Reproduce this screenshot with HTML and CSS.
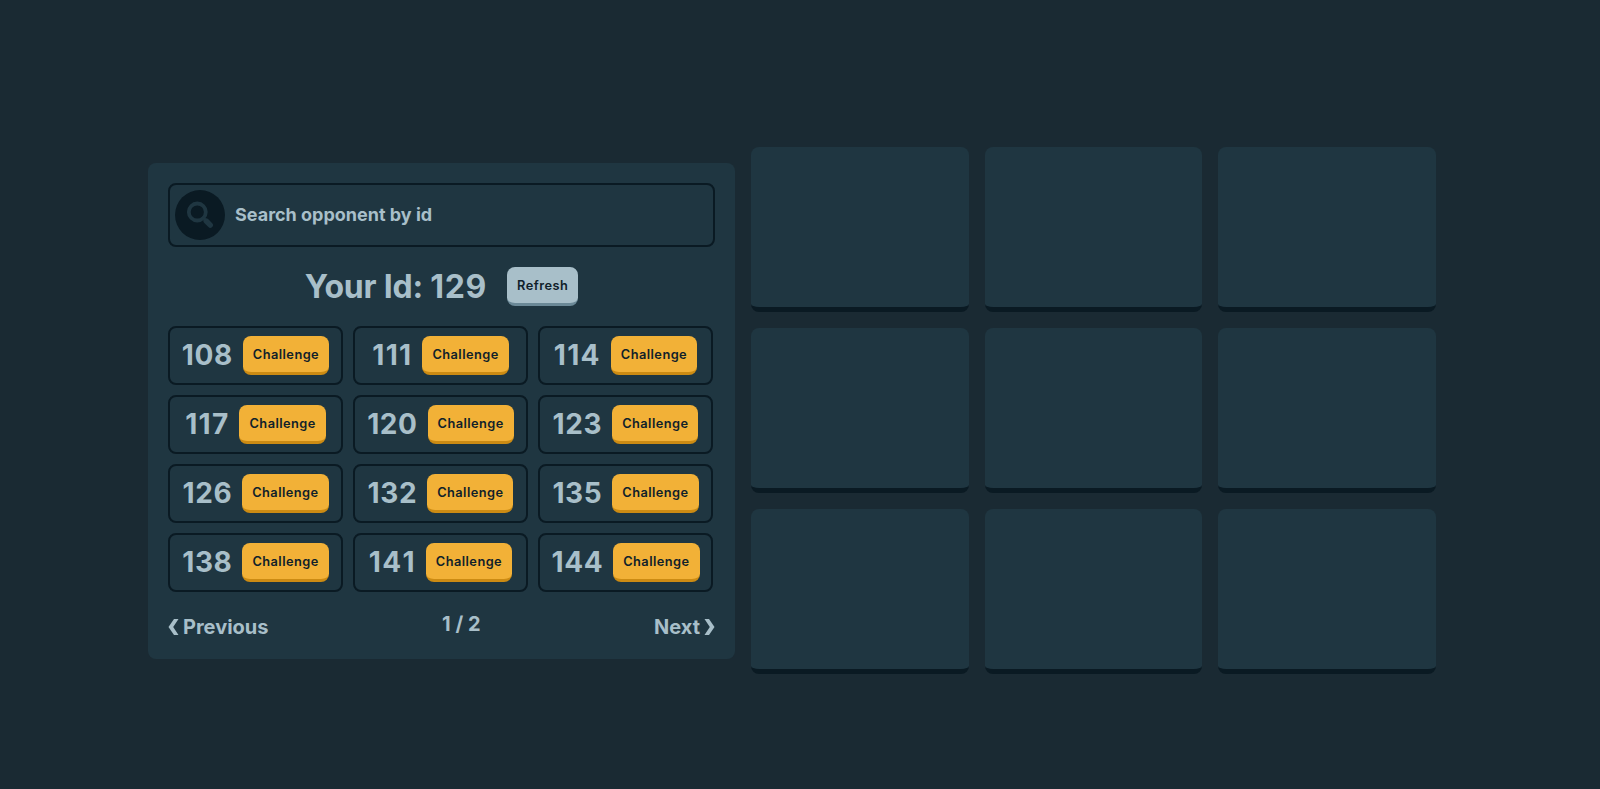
FILE: index.html
```html
<!DOCTYPE html>
<html lang="en">
<head>
<meta charset="utf-8">
<title>Tic Tac Toe</title>
<link rel="stylesheet" href="styles.css">
</head>
<body>
<main class="game">
  <section class="lobby">
    <div class="search">
      <span class="search-icon">
        <svg width="28" height="28" viewBox="0 0 28 28" fill="none"><circle cx="11.3" cy="11" r="8.5" stroke-width="3.8"/><path d="M17 16.7L19.5 19.2" stroke-width="3"/><path d="M20.2 20L24.3 24.1" stroke-width="5.4" stroke-linecap="round"/></svg>
      </span>
      <span class="search-text">Search opponent by id</span>
    </div>
    <div class="identity"><h1>Your Id: <span class="digits">129</span></h1><button class="btn refresh">Refresh</button></div>
    <div class="players">
      <div class="player"><b>108</b><button class="btn">Challenge</button></div>
      <div class="player"><b class="narrow">111</b><button class="btn">Challenge</button></div>
      <div class="player"><b class="narrow">114</b><button class="btn">Challenge</button></div>
      <div class="player"><b class="narrow">117</b><button class="btn">Challenge</button></div>
      <div class="player"><b>120</b><button class="btn">Challenge</button></div>
      <div class="player"><b>123</b><button class="btn">Challenge</button></div>
      <div class="player"><b>126</b><button class="btn">Challenge</button></div>
      <div class="player"><b>132</b><button class="btn">Challenge</button></div>
      <div class="player"><b>135</b><button class="btn">Challenge</button></div>
      <div class="player"><b>138</b><button class="btn">Challenge</button></div>
      <div class="player"><b class="narrow">141</b><button class="btn">Challenge</button></div>
      <div class="player"><b>144</b><button class="btn">Challenge</button></div>
    </div>
    <nav class="pager">
      <span class="page-link"><svg width="11" height="16" viewBox="0 0 11 16"><path d="M6 0H10.5L5.2 8L10.5 16H6L0.5 8Z"/></svg>Previous</span>
      <span class="page-count">1 / 2</span>
      <span class="page-link">Next<svg width="11" height="16" viewBox="0 0 11 16"><path d="M5 0H0.5L5.8 8L0.5 16H5L10.5 8Z"/></svg></span>
    </nav>
  </section>
  <section class="board">
    <div class="cell"></div><div class="cell"></div><div class="cell"></div>
    <div class="cell"></div><div class="cell"></div><div class="cell"></div>
    <div class="cell"></div><div class="cell"></div><div class="cell"></div>
  </section>
</main>
</body>
</html>
```
FILE: styles.css
```css
* { box-sizing: border-box; }
body {
  margin: 0;
  height: 789px;
  overflow: hidden;
  background: #1a2a33;
  color: #a8bfc9;
  font-family: Inter, sans-serif;
}
.game {
  display: flex;
  align-items: flex-start;
  gap: 16px;
  padding: 147px 0 0 148px;
}
.lobby {
  width: 587px;
  height: 496px;
  margin-top: 16px;
  padding: 20px;
  border-radius: 8px;
  background: #1f3641;
}
.search {
  display: flex;
  align-items: center;
  gap: 10px;
  height: 64px;
  padding: 0 5px;
  border: 2px solid #0a1a23;
  border-radius: 8px;
}
.search-icon {
  display: flex;
  align-items: center;
  justify-content: center;
  width: 50px;
  height: 50px;
  border-radius: 50%;
  background: #0a1a23;
}
.search-icon svg { stroke: #1f3641; }
.search-text { padding-bottom: 2px; font-size: 18px; font-weight: 700; }
.identity {
  display: flex;
  align-items: center;
  justify-content: center;
  gap: 20px;
  height: 39px;
  margin: 20px 0;
}
.identity h1 { margin: 0; font-size: 32px; line-height: 39px; font-weight: 700; letter-spacing: -0.22px; }
.digits { letter-spacing: 0.7px; }
.btn {
  height: 39px;
  padding: 0 10px;
  border: 0;
  border-bottom: 3px solid #cc8b13;
  border-radius: 8px;
  background: #f2b137;
  color: #10212a;
  font: 600 12.8px Inter, sans-serif;
  letter-spacing: 0.45px;
}
.refresh { background: #a8bfc9; border-color: #6b8997; }
.players {
  display: grid;
  grid-template-columns: repeat(3, 175px);
  grid-auto-rows: 59px;
  gap: 10px;
}
.player {
  display: flex;
  align-items: flex-start;
  justify-content: center;
  gap: 10px;
  padding-top: 8px;
  border: 2px solid #0a1a23;
  border-radius: 8px;
}
.player b {
  font-size: 28px;
  line-height: 38px;
  font-weight: 700;
  font-kerning: none;
  letter-spacing: 0.6px;
}
.player .narrow { letter-spacing: 1.3px; }
.pager {
  display: flex;
  justify-content: space-between;
  margin-top: 20px;
  font-size: 20px;
  line-height: 24px;
  font-weight: 700;
}
.page-link { display: flex; align-items: center; gap: 4px; padding-top: 3px; }
.page-link svg { fill: #a8bfc9; }
.board {
  display: grid;
  grid-template-columns: repeat(3, 1fr);
  grid-auto-rows: 165px;
  gap: 16px;
  width: 685px;
}
.cell {
  border-bottom: 5px solid #0a1a23;
  border-radius: 8px;
  background: #1f3641;
}
```
